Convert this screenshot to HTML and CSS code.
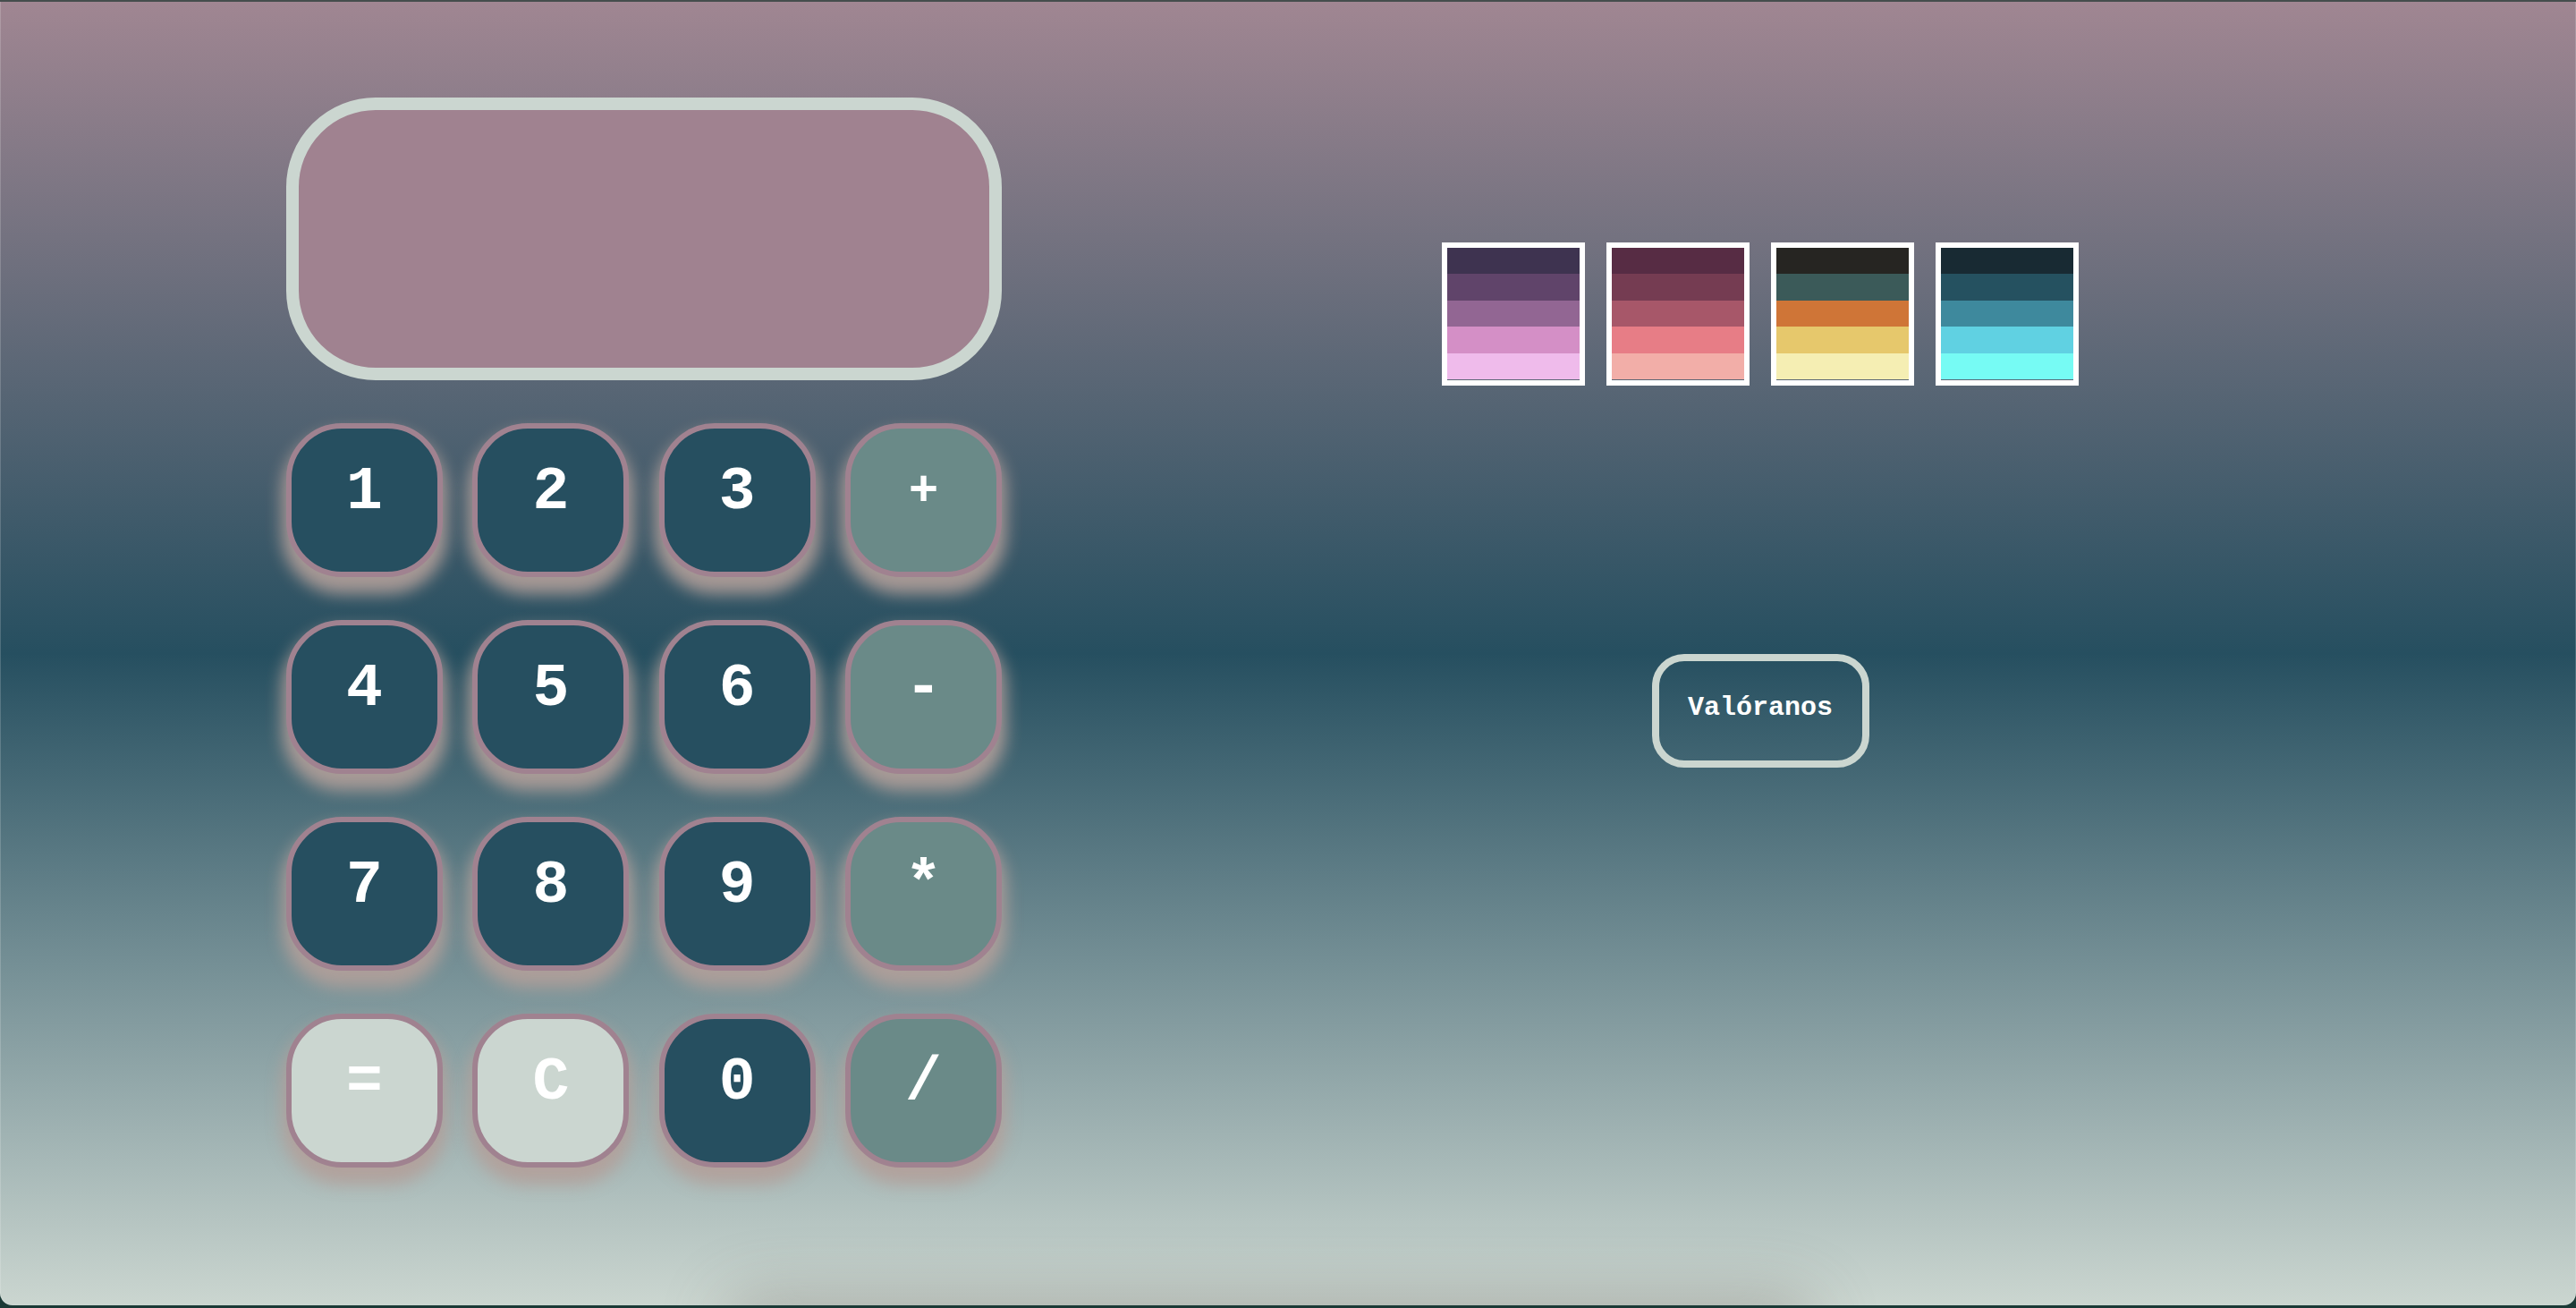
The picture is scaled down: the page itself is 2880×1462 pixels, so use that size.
FILE: index.html
```html
<!DOCTYPE html>
<html lang="es">
<head>
<meta charset="utf-8">
<title>Calculadora</title>
<link rel="stylesheet" href="styles.css">
</head>
<body>
<div class="window">
  <main class="layout">
    <section class="calculator">
      <div class="display"></div>
      <div class="keys">
        <button class="key num">1</button>
        <button class="key num">2</button>
        <button class="key num">3</button>
        <button class="key op small">+</button>
        <button class="key num">4</button>
        <button class="key num">5</button>
        <button class="key num">6</button>
        <button class="key op">-</button>
        <button class="key num">7</button>
        <button class="key num">8</button>
        <button class="key num">9</button>
        <button class="key op">*</button>
        <button class="key light">=</button>
        <button class="key light">C</button>
        <button class="key num">0</button>
        <button class="key op">/</button>
      </div>
    </section>
    <aside class="side">
      <div class="palettes">
        <div class="palette">
          <span class="stripe p1a"></span><span class="stripe p1b"></span><span class="stripe p1c"></span><span class="stripe p1d"></span><span class="stripe p1e"></span>
        </div>
        <div class="palette">
          <span class="stripe p2a"></span><span class="stripe p2b"></span><span class="stripe p2c"></span><span class="stripe p2d"></span><span class="stripe p2e"></span>
        </div>
        <div class="palette">
          <span class="stripe p3a"></span><span class="stripe p3b"></span><span class="stripe p3c"></span><span class="stripe p3d"></span><span class="stripe p3e"></span>
        </div>
        <div class="palette">
          <span class="stripe p4a"></span><span class="stripe p4b"></span><span class="stripe p4c"></span><span class="stripe p4d"></span><span class="stripe p4e"></span>
        </div>
      </div>
      <button class="rate">Valóranos</button>
    </aside>
  </main>
  <div class="floor-shadow"></div>
</div>
</body>
</html>
```
FILE: styles.css
```css
html, body {
  margin: 0;
  padding: 0;
  height: 100%;
}
body {
  background: linear-gradient(#454d4d 0, #454d4d 40%, #1b3a36 60%, #1b3a36 100%);
  overflow: hidden;
  font-family: "Liberation Mono", "DejaVu Sans Mono", monospace;
}
.window {
  position: relative;
  margin-top: 2px;
  height: 1457px;
  box-sizing: border-box;
  border-radius: 0 0 14px 14px;
  overflow: hidden;
  background: linear-gradient(#a08692 0%, #264f60 50%, #cbd6d0 100%);
  box-shadow: inset 1px 0 0 rgba(255,255,255,0.18), inset -1px 0 0 rgba(255,255,255,0.18);
  padding: 107px 0 0 320px;
}
.layout {
  display: flex;
  gap: 492px;
  align-items: flex-start;
}
.calculator {
  width: 800px;
  display: flex;
  flex-direction: column;
  gap: 48px;
}
.display {
  height: 316px;
  box-sizing: border-box;
  border: 14px solid #cbd6d0;
  border-radius: 100px;
  background: #a08290;
}
.keys {
  display: grid;
  grid-template-columns: repeat(4, 175px);
  grid-auto-rows: 172px;
  column-gap: 33.33px;
  row-gap: 48px;
}
.key {
  box-sizing: border-box;
  border: 6px solid #a08290;
  border-radius: 62px;
  color: #ffffff;
  font-family: "Liberation Mono", "DejaVu Sans Mono", monospace;
  font-weight: bold;
  font-size: 68px;
  padding: 0 0 20px 0;
  display: flex;
  align-items: center;
  justify-content: center;
  box-shadow: 0 14px 18px 5px rgba(178,160,154,0.9);
  cursor: pointer;
}
.num { background: #264f60; }
.op { background: #6a8a88; }
.small { font-size: 56px; }
.light { background: #cbd6d0; }

.side {
  width: 712px;
  display: flex;
  flex-direction: column;
  align-items: center;
  padding-top: 162px;
  gap: 300px;
}
.palettes {
  display: flex;
  gap: 24px;
}
.palette {
  width: 160px;
  height: 160px;
  box-sizing: border-box;
  border: 6px solid #ffffff;
  display: flex;
  flex-direction: column;
}
.stripe {
  display: block;
  height: 29.4px;
  flex: none;
}
.p1a { background: #3e3350; }
.p1b { background: #60446a; }
.p1c { background: #926693; }
.p1d { background: #d48fc6; }
.p1e { background: #efbbeb; }
.p2a { background: #572c44; }
.p2b { background: #753c52; }
.p2c { background: #a75769; }
.p2d { background: #e77d86; }
.p2e { background: #f2aea8; }
.p3a { background: #262522; }
.p3b { background: #3b5a59; }
.p3c { background: #cf7537; }
.p3d { background: #e6c86c; }
.p3e { background: #f5eeb3; }
.p4a { background: #182a33; }
.p4b { background: #255160; }
.p4c { background: #3e899d; }
.p4d { background: #60d1e2; }
.p4e { background: #76fbf4; }

.rate {
  width: 243px;
  height: 127px;
  box-sizing: border-box;
  border: 8px solid #cbd6d0;
  border-radius: 36px;
  background: transparent;
  color: #ffffff;
  font-family: "Liberation Mono", "DejaVu Sans Mono", monospace;
  font-weight: bold;
  font-size: 30px;
  padding: 0 0 8px 0;
  cursor: pointer;
}
.floor-shadow {
  position: absolute;
  left: 820px;
  width: 1200px;
  bottom: -60px;
  height: 60px;
  border-radius: 30px;
  box-shadow: 0 0 70px 10px rgba(110,100,95,0.35);
}
```
